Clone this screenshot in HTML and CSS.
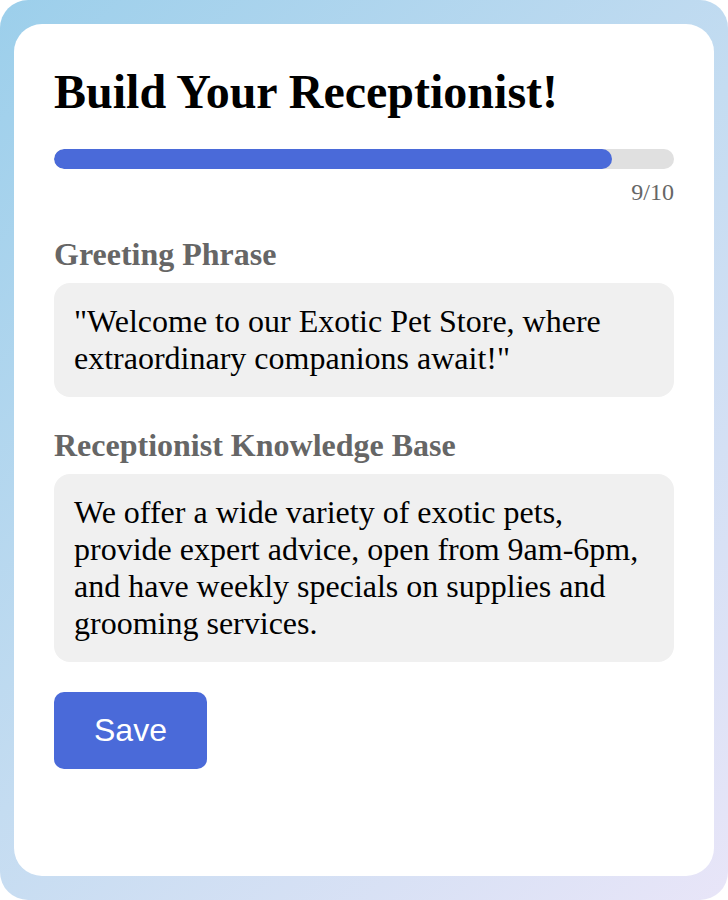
FILE: index.html
```html
<!DOCTYPE html>
<html lang="en">
<head>
    <meta charset="UTF-8">
    <title>Build Your Receptionist</title>
    <link rel="stylesheet" href="styles.css">
</head>
<body>
    <div class="frame">
        <div class="card">
            <h1>Build Your Receptionist!</h1>

            <div class="progress">
                <div class="progress-fill" style="width: 90%;"></div>
            </div>
            <div class="progress-text">9/10</div>

            <h3 class="field-label">Greeting Phrase</h3>
            <div class="field-box">"Welcome to our Exotic Pet Store, where extraordinary companions await!"</div>

            <h3 class="field-label">Receptionist Knowledge Base</h3>
            <div class="field-box">We offer a wide variety of exotic pets, provide expert advice, open from 9am-6pm, and have weekly specials on supplies and grooming services.</div>

            <button class="save-btn">Save</button>
        </div>
    </div>
</body>
</html>
```

FILE: styles.css
```css
body {
    margin: 0;
    background-color: #fff;
    font-family: "Liberation Serif", "Times New Roman", serif;
}

.frame {
    width: 728px;
    height: 900px;
    box-sizing: border-box;
    padding: 24px 14px;
    border-radius: 28px;
    background: linear-gradient(135deg, #9ccfeb 0%, #c4dcf1 50%, #e8e5f8 100%);
}

.card {
    height: 100%;
    box-sizing: border-box;
    padding: 40px;
    border-radius: 28px;
    background-color: #fff;
}

h1 {
    margin: 0;
    font-size: 48px;
    font-weight: bold;
    color: #000;
}

.progress {
    margin-top: 30px;
    height: 20px;
    border-radius: 10px;
    background-color: #e0e0e0;
    overflow: hidden;
}

.progress-fill {
    height: 100%;
    border-radius: 10px;
    background-color: #4a6ad9;
}

.progress-text {
    margin-top: 10px;
    margin-bottom: 30px;
    text-align: right;
    font-size: 24px;
    color: #666;
}

.field-label {
    margin: 0 0 10px;
    font-size: 32px;
    font-weight: bold;
    color: #666;
}

.field-box {
    margin-bottom: 30px;
    padding: 20px;
    border-radius: 16px;
    background-color: #f0f0f0;
    font-size: 32px;
    color: #000;
}

.field-box:last-of-type {
    margin-bottom: 30px;
}

.save-btn {
    display: block;
    padding: 20px 40px;
    border: none;
    border-radius: 10px;
    background-color: #4a6ad9;
    color: #fff;
    font-family: "Liberation Sans", Arial, sans-serif;
    font-size: 32px;
    line-height: normal;
    cursor: pointer;
}
```
